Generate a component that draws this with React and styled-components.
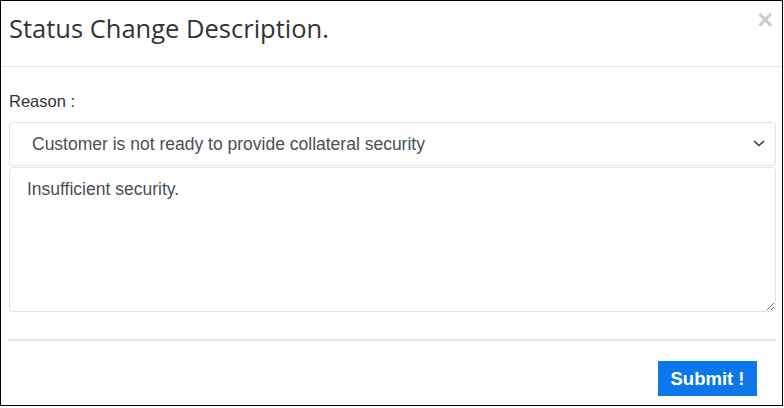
import React from "react";
import styled, { createGlobalStyle } from "styled-components";

const GlobalStyle = createGlobalStyle`
  html, body {
    margin: 0;
    padding: 0;
    background: #ffffff;
  }
  * { box-sizing: border-box; }
`;

const Modal = styled.section`
  width: 783px;
  height: 406px;
  border: 1px solid #000000;
  background: #ffffff;
  display: flex;
  flex-direction: column;
  font-family: "Liberation Sans", Arial, sans-serif;
`;

const Header = styled.header`
  position: relative;
  height: 66px;
  border-bottom: 1px solid #e5e5e5;
  padding: 10px 8px 0;
`;

const Title = styled.h4`
  margin: 0;
  font-family: "Open Sans", "Noto Sans", sans-serif;
  font-weight: 400;
  font-size: 25.5px;
  line-height: 34px;
  color: #333333;
`;

const Close = styled.button`
  position: absolute;
  top: 6px;
  right: 9px;
  border: 0;
  background: none;
  padding: 0;
  font-family: "Liberation Sans", Arial, sans-serif;
  font-size: 27px;
  font-weight: 700;
  line-height: 1;
  color: #000000;
  opacity: 0.2;
  cursor: pointer;
`;

const Body = styled.div`
  padding: 26px 6px 0 8px;
  display: flex;
  flex-direction: column;
`;

const Label = styled.label`
  font-size: 16.5px;
  line-height: 16px;
  color: #333333;
  margin-bottom: 13px;
`;

const SelectWrap = styled.div`
  position: relative;
  margin-bottom: 1px;
`;

const Select = styled.select`
  appearance: none;
  -webkit-appearance: none;
  width: 100%;
  height: 44px;
  padding: 0 40px 0 22px;
  border: 1px solid #dfe3e8;
  border-radius: 4px;
  background: #ffffff;
  font-family: "Liberation Sans", Arial, sans-serif;
  font-size: 17.5px;
  color: #495057;
  outline: none;
`;

const Chevron = styled.svg`
  position: absolute;
  right: 11px;
  top: 18px;
  pointer-events: none;
`;

const TextArea = styled.textarea`
  width: 100%;
  height: 145px;
  padding: 9px 17px;
  border: 1px solid #dfe3e8;
  border-radius: 4px;
  font-family: "Liberation Sans", Arial, sans-serif;
  font-size: 17.5px;
  line-height: 24px;
  color: #495057;
  outline: none;
  resize: both;
`;

const Footer = styled.footer`
  margin: 27px 6px 0 7px;
  border-top: 2px solid #e5e5e5;
  padding: 20px 19px 0 0;
  display: flex;
  justify-content: flex-end;
`;

const SubmitButton = styled.button`
  width: 99px;
  height: 35px;
  border: 0;
  border-radius: 0;
  background: #0b77ea;
  color: #ffffff;
  font-family: "Liberation Sans", Arial, sans-serif;
  font-size: 18.5px;
  font-weight: 700;
  cursor: pointer;
`;

export default function App() {
  return (
    <>
      <GlobalStyle />
      <Modal>
        <Header>
          <Title>Status Change Description.</Title>
          <Close aria-label="Close">×</Close>
        </Header>
        <Body>
          <Label htmlFor="reason">Reason :</Label>
          <SelectWrap>
            <Select id="reason" defaultValue="collateral">
              <option value="collateral">
                Customer is not ready to provide collateral security
              </option>
            </Select>
            <Chevron width="12" height="7" viewBox="0 0 12 7">
              <path d="M1 1 L6 5.5 L11 1" fill="none" stroke="#343a40" strokeWidth="1.6" />
            </Chevron>
          </SelectWrap>
          <TextArea defaultValue="Insufficient security." />
        </Body>
        <Footer>
          <SubmitButton>Submit !</SubmitButton>
        </Footer>
      </Modal>
    </>
  );
}
